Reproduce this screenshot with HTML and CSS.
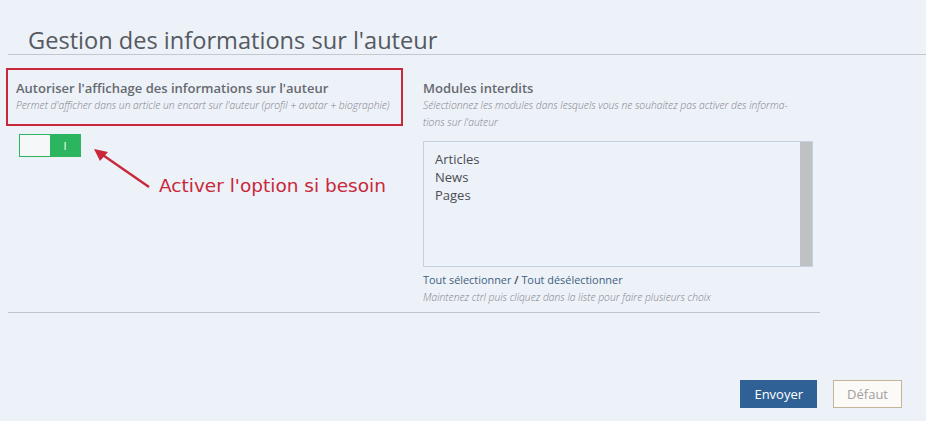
FILE: index.html
```html
<!DOCTYPE html>
<html lang="fr">
<head>
<meta charset="utf-8">
<title>Gestion des informations sur l'auteur</title>
<link rel="stylesheet" href="styles.css">
</head>
<body>
<div class="page">
  <h1 class="title">Gestion des informations sur l'auteur</h1>
  <div class="form">
    <div class="col-left">
      <div class="annot-box">
        <div class="label">Autoriser l'affichage des informations sur l'auteur</div>
        <div class="help">Permet d'afficher dans un article un encart sur l'auteur (profil + avatar + biographie)</div>
      </div>
      <div class="toggle"><span class="off"></span><span class="on">I</span></div>
    </div>
    <div class="col-right">
      <div class="label">Modules interdits</div>
      <div class="help">Sélectionnez les modules dans lesquels vous ne souhaitez pas activer des informa-<br>tions sur l'auteur</div>
      <div class="listbox">
        <div class="options">
          <div>Articles</div>
          <div>News</div>
          <div>Pages</div>
        </div>
        <div class="scrollbar"></div>
      </div>
      <div class="links"><span>Tout sélectionner</span> <b>/</b> <span>Tout désélectionner</span></div>
      <div class="help">Maintenez ctrl puis cliquez dans la liste pour faire plusieurs choix</div>
    </div>
  </div>
  <svg class="arrow" width="60" height="45" viewBox="0 0 60 45">
    <line x1="5" y1="4" x2="57" y2="40" stroke="#c8283a" stroke-width="2.4"/>
    <polygon points="2,2 16,5 8,14" fill="#c8283a"/>
  </svg>
  <div class="annot-text">Activer l'option si besoin</div>
  <div class="divider"></div>
  <div class="actions">
    <button class="btn btn-primary">Envoyer</button>
    <button class="btn btn-default">Défaut</button>
  </div>
</div>
</body>
</html>
```
FILE: styles.css
```css
html, body {
  margin: 0;
  padding: 0;
  background: #edf1f8;
  font-family: "Open Sans", "Liberation Sans", sans-serif;
}
.page {
  width: 926px;
  height: 421px;
  position: relative;
  overflow: hidden;
}
.title {
  margin: 0 0 0 8px;
  padding: 25px 0 0 20px;
  height: 29px;
  font-size: 23.6px;
  line-height: 30px;
  font-weight: 400;
  color: #555a60;
  border-bottom: 1px solid #c3c8d0;
}
.form {
  display: flex;
  gap: 20px;
  padding: 13px 0 0 6px;
  height: 244px;
}
.col-left {
  width: 397px;
}
.annot-box {
  border: 2px solid #c8283a;
  padding: 9px 8px 9px 8px;
  height: 36px;
}
.label {
  font-size: 13px;
  line-height: 18px;
  font-weight: 600;
  color: #666a70;
}
.help {
  font-size: 10.3px;
  line-height: 17px;
  font-style: italic;
  font-weight: 300;
  color: #7f838a;
}
.toggle {
  display: flex;
  width: 62px;
  height: 23px;
  margin: 8px 0 0 13px;
  box-sizing: border-box;
  border: 1px solid #2bb55f;
}
.toggle .off {
  flex: 1;
  background: #f5f7f9;
}
.toggle .on {
  width: 30px;
  background: #2bb55f;
  color: #fff;
  font-size: 11px;
  line-height: 21px;
  text-align: center;
}
.col-right {
  width: 390px;
  padding-top: 11px;
}
.listbox {
  margin-top: 10px;
  display: flex;
  height: 126px;
  box-sizing: border-box;
  border: 1px solid #c3d3e3;
  background: #edf1f8;
}
.options {
  flex: 1;
  padding: 8px 11px;
  font-size: 13px;
  line-height: 18px;
  color: #4a4e54;
}
.scrollbar {
  width: 12px;
  background: #c0c1c3;
}
.links {
  margin-top: 4px;
  font-size: 10.9px;
  line-height: 18px;
  color: #3e5f80;
}
.links b {
  font-weight: 600;
  color: #3a4450;
}
.arrow {
  position: absolute;
  left: 92px;
  top: 147px;
}
.annot-text {
  position: absolute;
  left: 159px;
  top: 174px;
  font-family: "DejaVu Sans", sans-serif;
  font-size: 18.5px;
  line-height: 24px;
  color: #c8283a;
}
.divider {
  margin-left: 8px;
  width: 812px;
  height: 1px;
  background: #c0c4cc;
}
.actions {
  display: flex;
  justify-content: flex-end;
  gap: 16px;
  padding: 67px 24px 0 0;
}
.btn {
  height: 28px;
  font-family: "Open Sans", sans-serif;
  font-size: 13px;
  padding: 0 13px;
  border-radius: 0;
}
.btn-primary {
  background: #2f6196;
  border: 1px solid #2f6196;
  color: #fff;
}
.btn-default {
  background: #fcfaf7;
  border: 1px solid #c6b49a;
  color: #a0a0a0;
}
```
